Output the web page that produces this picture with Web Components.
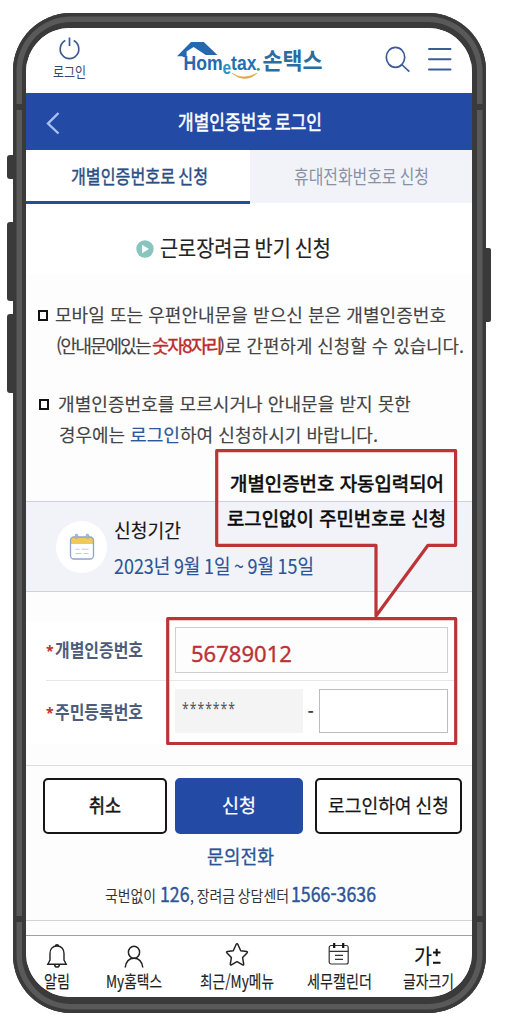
<!DOCTYPE html>
<html lang="ko">
<head>
<meta charset="utf-8">
<meta name="viewport" content="width=device-width, initial-scale=1">
<title>손택스</title>
<style>
  body {
    margin: 0;
    width: 508px;
    height: 1034px;
    overflow: hidden;
    background: #fff;
    font-family: "Noto Sans CJK KR", sans-serif;
    color: #444;
  }
</style>
</head>
<body>
<phone-frame>
  <app-header></app-header>
  <title-bar></title-bar>
  <tab-bar></tab-bar>
  <notice-section></notice-section>
  <period-box></period-box>
  <login-form></login-form>
  <action-buttons></action-buttons>
  <contact-info></contact-info>
  <bottom-nav></bottom-nav>
  <callout-overlay slot="overlay"></callout-overlay>
</phone-frame>

<script>
class BaseElement extends HTMLElement {
  constructor() {
    super();
    this.attachShadow({ mode: 'open' });
  }

  connectedCallback() {
    this.shadowRoot.innerHTML = this.template();
  }
}

class PhoneFrame extends BaseElement {
  template() {
    return `
      <style>
        :host { display: block; position: relative; padding: 13px 0 0 12.5px; }
        .body {
          box-sizing: border-box;
          width: 473.5px;
          height: 999.5px;
          padding: 15px 14px 15.5px 13.5px;
          border-radius: 58px;
          background: #3a3a3a;
          box-shadow: inset 0 0 0 3.5px #3a3a3a, inset 0 0 0 9px #595959;
        }
        .screen {
          height: 969px;
          border-radius: 44px;
          background: #fdfdfd;
          overflow: hidden;
        }
        i { position: absolute; background: #3a3a3a; }
        .key { width: 7px; left: 6.5px; border-radius: 3px 0 0 3px; }
        .right { left: 485px; width: 6px; border-radius: 0 2px 2px 0; }
        .seam { width: 7px; height: 6.5px; }
      </style>
      <i class="key" style="top:155px;height:24px"></i>
      <i class="key" style="top:221.5px;height:79.5px"></i>
      <i class="key" style="top:314px;height:79px"></i>
      <i class="key right" style="top:248px;height:74px"></i>
      <div class="body"><div class="screen"><slot></slot></div></div>
      <i class="seam" style="left:15px;top:103.5px"></i>
      <i class="seam" style="left:476px;top:103.5px"></i>
      <i class="seam" style="left:15px;top:915.5px"></i>
      <i class="seam" style="left:476px;top:915.5px"></i>
      <slot name="overlay"></slot>
    `;
  }
}

class AppHeader extends BaseElement {
  template() {
    return `
      <style>
        :host { display: flex; height: 64.5px; background: #fff; }
        .login { margin: 9px 0 0 27px; width: 33px; }
        .login svg { display: block; margin-left: 5px; }
        fit-text { font-size: 13.5px; line-height: 18px; color: #33486f; }
        .logo { margin: 10px 0 0 89px; }
        .search { margin: 17px 0 0 60px; }
        .menu { margin: 19px 0 0 17px; }
        svg { flex: none; display: block; }
      </style>
      <div class="login">
        <svg width="23" height="25" viewBox="0 0 23 25" fill="none" stroke="#3c5a93" stroke-width="1.7">
          <path d="M11.5 .5v8.5M7.3 3.500A9.3 9.6 0 1 0 15.7 3.500"/>
        </svg>
        <fit-text w="33">로그인</fit-text>
      </div>
      <svg class="logo" width="150" height="46" viewBox="175 38 150 46">
        <path d="M177 56.2L191 42h12.8l13.6 13h-11.6L193.6 47l-7 4.600v5.400h-3.800v-.8z" fill="#2468b0"/>
        <text x="183.500" y="69.700" font-family="Liberation Sans, sans-serif" font-weight="bold" font-size="20.500" textLength="73" lengthAdjust="spacingAndGlyphs" fill="#2468b0">Hom<tspan dy="4.300" font-size="18" fill="#2695c9">e</tspan><tspan dy="-4.300" fill="#286fae">tax</tspan></text>
        <circle cx="258.300" cy="69.200" r="1.500" fill="#3fa05a"/>
        <path d="M232 73.200q11 7.500 25 .1q-12 10.500-25-.1z" fill="#dca94a" stroke="#dca94a" stroke-width=".6"/>
        <text x="262.500" y="68.500" font-family="Noto Sans CJK KR, sans-serif" font-size="23" font-weight="bold" textLength="60" lengthAdjust="spacingAndGlyphs" fill="#2c6d9f">손택스</text>
      </svg>
      <svg class="search" width="26" height="30" viewBox="0 0 26 30" fill="none" stroke="#3c5c94" stroke-width="1.700">
        <ellipse cx="10.500" cy="12.300" rx="9.200" ry="10"/><path d="M16.700 19.500l7.600 7.200"/>
      </svg>
      <svg class="menu" width="24" height="26" viewBox="0 0 24 26" stroke="#3c5c94" stroke-width="2" stroke-linecap="round">
        <path d="M1 2h21.500M1 12.300h21.500M1 22.500h21.500"/>
      </svg>
    `;
  }
}

class TitleBar extends BaseElement {
  template() {
    return `
      <style>
        :host { display: flex; align-items: center; height: 57.5px; background: #234ba5; }
        svg { margin: 4px 0 0 20px; }
        fit-text { margin: 0 0 1px 118px; font-size: 20.5px; line-height: 26px; word-spacing: -.1em; color: #fff; -webkit-text-stroke: .5px; }
      </style>
      <svg width="14" height="24" viewBox="0 0 14 24" fill="none" stroke="#a9c0f3" stroke-width="2.4">
        <path d="M12.500 2L2 12.500l10.500 10"/>
      </svg>
      <fit-text w="144">개별인증번호 로그인</fit-text>
    `;
  }
}

class TabBar extends BaseElement {
  template() {
    return `
      <style>
        :host { display: grid; grid-template-columns: 223.5px 1fr; height: 54px; background: #fff; }
        div { box-sizing: border-box; height: 54px; padding-top: 13px; }
        .on { padding-left: 44.500px; border-bottom: 3.500px solid #244e94; color: #2a4d83; -webkit-text-stroke: .4px; }
        .off { height: 53px; padding-left: 44px; background: #f2f3f9; color: #8791a5; }
        fit-text { font-size: 19px; line-height: 26px; word-spacing: -.08em; }
      </style>
      <div class="on"><fit-text w="137">개별인증번호로 신청</fit-text></div>
      <div class="off"><fit-text w="135">휴대전화번호로 신청</fit-text></div>
    `;
  }
}

class NoticeSection extends BaseElement {
  template() {
    return `
      <style>
        :host { display: block; height: 297px; }
        h1 { display: flex; align-items: center; height: 70.500px; box-sizing: border-box; margin: 0; padding: 14px 0 0 110px; background: #fff; font-weight: 400; }
        h1 fit-text { margin: 0 0 1px 6px; font-size: 22px; line-height: 30px; word-spacing: -.08em; color: #222; -webkit-text-stroke: .2px; }
        svg { display: block; margin-top: 5px; }
        .line { display: flex; height: 32px; font-size: 18.500px; line-height: 32px; color: #444; -webkit-text-stroke: .15px; }
        b { flex: none; box-sizing: border-box; width: 10px; height: 10.500px; margin: 12.500px 7px 0 12px; border: 2px solid #111; }
        .tight { letter-spacing: -.1em; }
        .red { color: #bc2a2c; -webkit-text-stroke: .4px; }
        .blue { color: #2d569c; -webkit-text-stroke: .2px; }
      </style>
      <h1>
        <svg width="18" height="18" viewBox="0 0 18 18"><circle cx="9" cy="9" r="8.700" fill="#87c5be"/><path d="M6 4.700l7 4.300l-7 4.300z" fill="#fff"/></svg>
        <fit-text w="171">근로장려금 반기 신청</fit-text>
      </h1>
      <div class="line" style="margin-top:23px">
        <b></b><fit-text w="391">모바일 또는 우편안내문을 받으신 분은 개별인증번호</fit-text>
      </div>
      <div class="line" style="padding-left:30px;margin-top:-.500px">
        <fit-text class="tight" w="94">(안내문에있는</fit-text>
        <fit-text class="tight red" w="69" style="margin-left:2px">숫자8자리</fit-text>
        <fit-text w="245" style="margin-left:-2.500px">)로 간편하게 신청할 수 있습니다.</fit-text>
      </div>
      <div class="line" style="margin-top:25.500px">
        <b style="margin-left:13px;margin-right:9px"></b><fit-text w="353">개별인증번호를 모르시거나 안내문을 받지 못한</fit-text>
      </div>
      <div class="line" style="padding-left:32.500px;margin-top:-1px">
        <fit-text w="71">경우에는&nbsp;</fit-text><fit-text class="blue" w="50">로그인</fit-text><fit-text w="198">하여 신청하시기 바랍니다.</fit-text>
      </div>
    `;
  }
}

class PeriodBox extends BaseElement {
  template() {
    return `
      <style>
        :host { display: flex; box-sizing: border-box; height: 91px; background: #f2f3f9; border: solid #cbd2e5; border-width: 1px 0; }
        .icon { display: flex; align-items: center; justify-content: center; width: 51px; height: 52px; margin: 19px 7px 0 30px; border-radius: 50%; background: #fff; }
        fit-text { font-size: 19px; line-height: 34px; color: #161616; -webkit-text-stroke: .15px; }
        .date { margin-top: 2px; font-size: 20px; word-spacing: -.08em; color: #2d5497; }
        .text { padding-top: 10.500px; }
      </style>
      <div class="icon">
        <svg width="26" height="28" viewBox="0 0 26 28" fill="none">
          <rect x="1.500" y="4" width="23" height="22" rx="3.500" fill="#fff"/>
          <path d="M1.500 11V7.500Q1.500 4 5 4h16q3.500 0 3.500 3.500V11z" fill="#f4c75d"/>
          <rect x="1.500" y="4" width="23" height="22" rx="3.500" stroke="#8fa4c9" stroke-width="1.300"/>
          <g fill="#a8b8d6" stroke="#8fa4c9" stroke-width=".6"><rect x="6.200" y="1" width="2.600" height="4.600" rx="1.300"/><rect x="17.200" y="1" width="2.600" height="4.600" rx="1.300"/></g>
          <path d="M6.500 16.200h4M12.500 16.200h7M6.500 20.500h6M14.500 20.500h5" stroke="#c3cad8" stroke-width="1.100"/>
        </svg>
      </div>
      <div class="text">
        <fit-text w="67">신청기간</fit-text>
        <fit-text class="date" w="200">2023년 9월 1일 ~ 9월 15일</fit-text>
      </div>
    `;
  }
}

class LoginForm extends BaseElement {
  template() {
    return `
      <style>
        :host { display: block; box-sizing: border-box; height: 174px; padding-top: 30px; border-bottom: 1.500px solid #dcdcdc; }
        .rows { height: 122px; box-sizing: border-box; background: #fff; padding: 5px 15px 0 20px; }
        .row { display: flex; height: 53px; }
        .row + .row { border-top: 1px solid #e7e7e7; padding-top: 8px; }
        .label { display: flex; width: 129px; height: 44px; align-items: center; color: #4d5c7a; }
        .label fit-text { font-size: 18px; line-height: 26px; font-weight: bold; }
        .star { width: 9px; padding-top: 3px; font: bold 14px/20px "Noto Sans", sans-serif; color: #c0302f; }
        .input { box-sizing: border-box; width: 273px; height: 45.500px; padding: 10px 0 0 15px; border: 1px solid #cfcfcd; background: #fdfdfd; }
        .input fit-text { font: 22.500px/32px "Noto Sans", sans-serif; color: #bb3235; -webkit-text-stroke: .35px; }
        .mask { width: 128px; height: 43.500px; background: #f4f4f4; }
        .mask fit-text { margin: 4px 0 0 7px; font: 16px/30px "Noto Sans", sans-serif; color: #555; letter-spacing: .08em; }
        .dash { width: 15.500px; text-align: center; line-height: 43px; font-size: 17px; font-weight: bold; }
        .empty { width: 129px; height: 44px; border: 1.500px solid #bdbdbb; padding: 0; background: #fff; }
      </style>
      <div class="rows">
        <div class="row">
          <div class="label"><span class="star">*</span><fit-text w="88">개별인증번호</fit-text></div>
          <div class="input"><fit-text w="101">56789012</fit-text></div>
        </div>
        <div class="row">
          <div class="label"><span class="star">*</span><fit-text w="88">주민등록번호</fit-text></div>
          <div class="mask"><fit-text w="54">*******</fit-text></div>
          <div class="dash">-</div>
          <div class="input empty"></div>
        </div>
      </div>
    `;
  }
}

class ActionButtons extends BaseElement {
  template() {
    return `
      <style>
        :host { display: flex; height: 56px; padding: 12px 0 0 17px; }
        button { display: flex; justify-content: center; align-items: center; box-sizing: border-box; height: 56px; padding: 0 0 3px; border: 2px solid #161616; border-radius: 5px; background: #fff; color: #161616; font: 19px "Noto Sans CJK KR", sans-serif; -webkit-text-stroke: .25px; }
        fit-text { line-height: 28px; word-spacing: -.06em; }
        .primary { border-color: #234ba5; background: #234ba5; color: #fff; }
      </style>
      <button style="width:124px"><fit-text w="32" style="-webkit-text-stroke:.6px">취소</fit-text></button>
      <button class="primary" style="width:128px;margin:0 11.500px 0 8px"><fit-text w="34">신청</fit-text></button>
      <button style="width:147px"><fit-text w="121">로그인하여 신청</fit-text></button>
    `;
  }
}

class ContactInfo extends BaseElement {
  template() {
    return `
      <style>
        :host { display: block; box-sizing: border-box; height: 87px; padding-top: 7.500px; border-bottom: 1px solid #d0d4d4; }
        .title { margin-left: 181px; font-size: 19px; line-height: 28px; color: #2d5497; -webkit-text-stroke: .3px; }
        .row { display: flex; align-items: baseline; margin-left: 79px; height: 46px; line-height: 47px; font-size: 15.500px; color: #333; }
        .num { font-size: 20.500px; color: #2d5497; -webkit-text-stroke: .4px; }
      </style>
      <fit-text class="title" w="67">문의전화</fit-text>
      <div class="row">
        <fit-text w="51">국번없이</fit-text>
        <fit-text class="num" w="29.500" style="margin-left:4px">126</fit-text><fit-text w="99" style="margin-right:2.500px;word-spacing:-.08em">, 장려금 상담센터</fit-text>
        <fit-text class="num" w="85">1566-3636</fit-text>
      </div>
    `;
  }
}

class BottomNav extends BaseElement {
  template() {
    return `
      <style>
        :host { display: flex; box-sizing: border-box; height: 64px; margin-top: 13.500px; padding-left: 18px; background: #fff; border-top: 1.500px solid #9da1a2; color: #222; }
        div { display: flex; flex-direction: column; align-items: center; padding-top: 6px; }
        svg { display: block; height: 27px; }
        fit-text { font-size: 17px; line-height: 23px; -webkit-text-stroke: .15px; }
        .size { width: 28px; height: 27px; display: grid; grid-template-columns: 19px 8px; align-items: center; color: #111; }
        .size fit-text { font-size: 20.500px; line-height: 27px; }
      </style>
      <div>
        <svg width="26" height="27" viewBox="0 0 26 27" fill="none" stroke="#222" stroke-width="1.400">
          <path d="M13 4c-4.700 0-7 3.400-7 7.500v6.500l-2.200 4.200h18.400L20 18v-6.500C20 7.400 17.700 4 13 4zM11.300 4q.2-1.400 1.700-1.400T14.700 4M10.500 22.500q.5 2.600 2.500 2.600t2.500-2.600"/>
        </svg>
        <fit-text w="26">알림</fit-text>
      </div>
      <div style="margin-left:35.500px">
        <svg width="26" height="27" viewBox="0 0 26 27" fill="none" stroke="#222" stroke-width="1.500">
          <ellipse cx="13" cy="10.300" rx="5.600" ry="6"/><path d="M4.200 25.500C5 19.500 8.500 16.300 13 16.300s8 3.200 8.800 9.200"/>
        </svg>
        <fit-text w="56">My홈택스</fit-text>
      </div>
      <div style="margin-left:38px">
        <svg width="26" height="27" viewBox="0 0 26 27" fill="none" stroke="#222" stroke-width="1.500" stroke-linejoin="round">
          <path d="M13 1.800q.6 0 .9.700l2.800 6.200 6 .8q1.300.3.300 1.400l-4.400 4.600 1.100 6.600q.1 1.400-1.100.8L13 19.700l-5.600 3.200q-1.200.6-1.100-.8l1.100-6.600L3 10.900q-1-1.100.3-1.400l6-.8 2.800-6.200q.3-.7.900-.7z"/>
        </svg>
        <fit-text w="74">최근/My메뉴</fit-text>
      </div>
      <div style="margin-left:33px">
        <svg width="26" height="27" viewBox="0 0 26 27" fill="none" stroke="#333" stroke-width="1.200">
          <rect x="3.200" y="3.500" width="19" height="18.500" rx="2"/><path d="M3.200 9.300h19M9 13.300h8M9 17.300h8"/>
          <path d="M8.200 1v5M17.200 1v5" stroke="#111" stroke-width="2.200"/>
        </svg>
        <fit-text w="65">세무캘린더</fit-text>
      </div>
      <div style="margin-left:31px">
        <span class="size">
          <fit-text w="18">가</fit-text>
          <svg width="8" height="27" viewBox="20 0 8 27" fill="none" stroke="#111" stroke-width="2">
            <path d="M20 10.500h7.500M23.700 6.700v7.500M20 20.700h7.500"/>
          </svg>
        </span>
        <fit-text w="51">글자크기</fit-text>
      </div>
    `;
  }
}

class CalloutOverlay extends BaseElement {
  template() {
    return `
      <style>
        :host { position: absolute; left: 0; top: 0; }
        svg { display: block; }
        .speech { position: absolute; left: 227px; top: 465px; width: 230px; color: #0a0a0a; font-size: 19px; line-height: 35px; -webkit-text-stroke: .65px; }
      </style>
      <svg width="508" height="760" fill="none" stroke="#bb3437" stroke-width="3.200" stroke-linejoin="round">
        <path d="M216.700 450.700H455.600V545.300H428L376 616V545.300H216.700z"/>
        <rect x="167.700" y="618.700" width="288" height="124.800"/>
      </svg>
      <div class="speech">
        <fit-text w="214" style="margin-left:3px">개별인증번호 자동입력되어</fit-text>
        <fit-text w="219">로그인없이 주민번호로 신청</fit-text>
      </div>
    `;
  }
}

// Condenses or widens one line of text to the width in its w attribute
class FitText extends BaseElement {
  template() {
    return `
      <style>
        :host { display: block; flex: none; white-space: nowrap; }
        span { display: inline-block; transform-origin: 0 50%; }
      </style>
      <span><slot></slot></span>
    `;
  }

  connectedCallback() {
    super.connectedCallback();
    const width = Number(this.getAttribute('w'));
    const span = this.shadowRoot.querySelector('span');
    const natural = span.getBoundingClientRect().width;
    this.style.width = `${width}px`;
    span.style.transform = `scaleX(${width / natural})`;
  }
}

customElements.define('phone-frame', PhoneFrame);
customElements.define('app-header', AppHeader);
customElements.define('title-bar', TitleBar);
customElements.define('tab-bar', TabBar);
customElements.define('notice-section', NoticeSection);
customElements.define('period-box', PeriodBox);
customElements.define('login-form', LoginForm);
customElements.define('action-buttons', ActionButtons);
customElements.define('contact-info', ContactInfo);
customElements.define('bottom-nav', BottomNav);
customElements.define('callout-overlay', CalloutOverlay);
customElements.define('fit-text', FitText);
</script>
</body>
</html>
